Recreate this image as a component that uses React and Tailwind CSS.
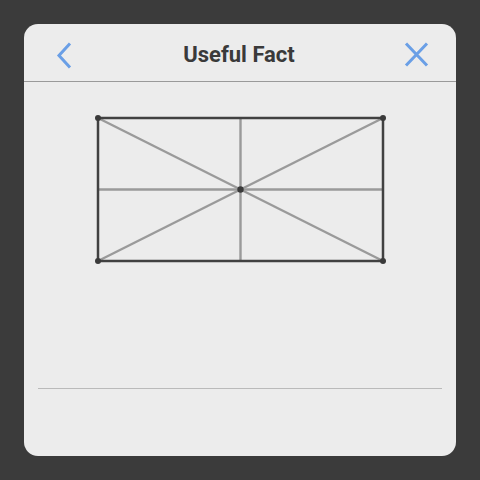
export default function App() {
  return (
    <div className="w-[480px] h-[480px] bg-[#3b3b3b] p-6" style={{ fontFamily: 'Roboto, "Liberation Sans", sans-serif' }}>
      <div className="flex h-full flex-col rounded-[14px] bg-[#ececec] overflow-hidden">
        {/* Header */}
        <div className="flex h-[58px] shrink-0 items-center justify-between border-b border-[#9a9a9a] pl-[20px] pr-[22px]">
          <svg width="36" height="36" viewBox="0 0 36 36" fill="none">
            <path d="M26 8.5 L15 20.5 L26 32.5" stroke="#6a9fe6" strokeWidth="3" />
          </svg>
          <h1 className="mt-[4px] text-[22px] font-bold text-[#3a3a3a] leading-none">Useful Fact</h1>
          <svg width="36" height="36" viewBox="0 0 36 36" fill="none">
            <path d="M8 8.5 L29 30.5 M29 8.5 L8 30.5" stroke="#6a9fe6" strokeWidth="3" />
          </svg>
        </div>

        {/* Diagram */}
        <div className="flex h-[306px] shrink-0 justify-center pt-[31px] pl-[1px]">
          <svg width="296" height="154" viewBox="0 0 296 154" fill="none">
            <g stroke="#9a9a9a" strokeWidth="2.4">
              <line x1="5" y1="5" x2="290" y2="148" />
              <line x1="290" y1="5" x2="5" y2="148" />
              <line x1="147.5" y1="5" x2="147.5" y2="148" />
              <line x1="5" y1="76.5" x2="290" y2="76.5" />
            </g>
            <rect x="5" y="5" width="285" height="143" stroke="#414141" strokeWidth="2.5" />
            <g fill="#3a3a3a">
              <circle cx="5" cy="5" r="3" />
              <circle cx="290" cy="5" r="3" />
              <circle cx="5" cy="148" r="3" />
              <circle cx="290" cy="148" r="3" />
              <circle cx="147.5" cy="76.5" r="3.2" />
            </g>
          </svg>
        </div>

        <div className="mx-[14px] border-t border-[#bababa]" />
        <div className="flex-1" />
      </div>
    </div>
  )
}
